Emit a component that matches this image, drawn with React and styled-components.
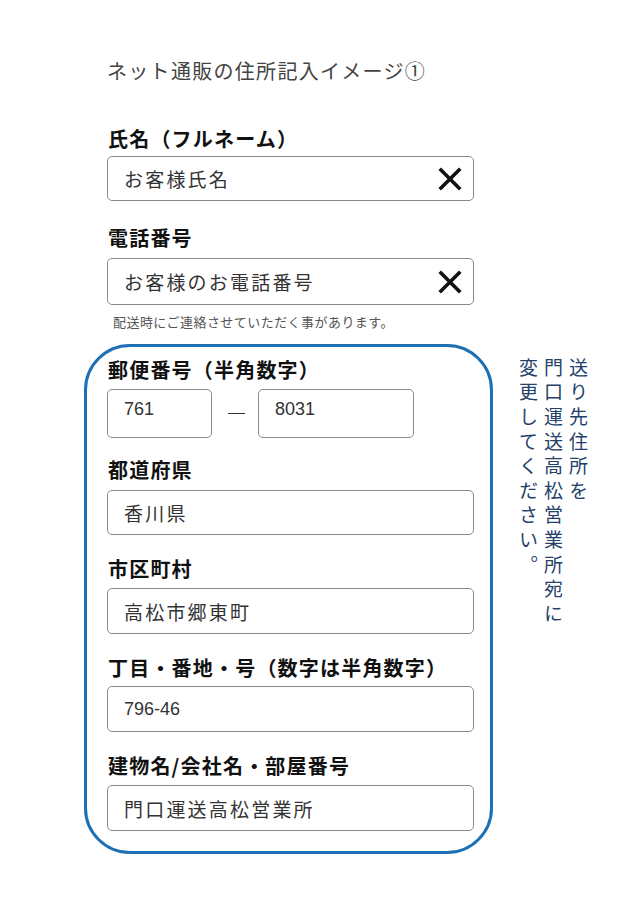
import React from "react";
import styled, { createGlobalStyle } from "styled-components";

const GlobalStyle = createGlobalStyle`
  html, body {
    margin: 0;
    padding: 0;
    background: #ffffff;
  }
  body {
    font-family: "Noto Sans CJK JP", "Noto Sans", sans-serif;
    color: #222;
    text-spacing-trim: space-all;
  }
`;

const Page = styled.div`
  display: flex;
  flex-direction: column;
  padding: 56px 0 40px 84px;
`;

const Title = styled.h1`
  margin: 0 0 40px 23px;
  font-size: 20px;
  font-weight: 400;
  letter-spacing: 1.3px;
  color: #444;
  line-height: 30px;
`;

const TopFields = styled.div`
  width: 409px;
  display: flex;
  flex-direction: column;
`;

const Field = styled.div`
  display: flex;
  flex-direction: column;
  padding: ${(p) => (p.$inner ? "0 16px 0 20px" : "0 19px 0 23px")};
  margin-bottom: ${(p) => p.$gap ?? 24}px;
`;

const Label = styled.div`
  font-size: 20px;
  font-weight: 700;
  letter-spacing: 1.2px;
  color: #111;
  line-height: 26px;
  margin-bottom: ${(p) => p.$gap ?? 4}px;
  padding-left: 1px;
  white-space: nowrap;
`;

const InputBox = styled.div`
  box-sizing: border-box;
  width: ${(p) => p.$width || "100%"};
  height: ${(p) => p.$height || 45}px;
  border: 1px solid #8a8a8a;
  border-radius: 5px;
  background: #fff;
  display: flex;
  align-items: ${(p) => (p.$top ? "flex-start" : "center")};
  padding: ${(p) => (p.$top ? "9px 10px 0 16px" : "0 10px 0 16px")};
  font-size: 19px;
  color: #333;
  font-family: ${(p) =>
    p.$latin
      ? '"Liberation Sans", Arial, sans-serif'
      : '"Noto Sans CJK JP", sans-serif'};
  ${(p) => (p.$latin ? "font-size: 18px;" : "")}
`;

const InputText = styled.span`
  flex: 1;
  white-space: nowrap;
  letter-spacing: ${(p) => (p.$wide ? "2.2px" : "0")};
`;

const ClearIcon = styled.svg`
  width: 24px;
  height: 24px;
  flex: none;
  margin-right: 1px;
`;

const Note = styled.div`
  margin: 8px 0 0 6px;
  font-size: 13px;
  letter-spacing: 0.45px;
  color: #555;
  line-height: 18px;
`;

const AddressRow = styled.div`
  display: flex;
  align-items: flex-start;
`;

const AddressBox = styled.div`
  box-sizing: border-box;
  width: 409px;
  flex: none;
  border: 3px solid #1d70b3;
  border-radius: 46px;
  padding: 10px 0 2px;
`;

const PostalRow = styled.div`
  display: flex;
  align-items: center;
`;

const Dash = styled.span`
  width: 17px;
  height: 1.5px;
  background: #333;
  margin: 0 13px 0 16px;
`;

const SideNote = styled.div`
  writing-mode: vertical-rl;
  margin: 14px 0 0 23px;
  font-size: 19px;
  line-height: 25px;
  letter-spacing: 5.6px;
  color: #24416a;
  font-family: "Noto Sans CJK JP", sans-serif;
`;

function Clear() {
  return (
    <ClearIcon viewBox="0 0 24 24">
      <path
        d="M3 3 L21 21 M21 3 L3 21"
        stroke="#111"
        strokeWidth="3.6"
        strokeLinecap="square"
        fill="none"
      />
    </ClearIcon>
  );
}

export default function App() {
  return (
    <>
      <GlobalStyle />
      <Page>
        <Title>ネット通販の住所記入イメージ①</Title>

        <TopFields>
          <Field $gap={24}>
            <Label>氏名（フルネーム）</Label>
            <InputBox>
              <InputText $wide>お客様氏名</InputText>
              <Clear />
            </InputBox>
          </Field>

          <Field $gap={13}>
            <Label $gap={7}>電話番号</Label>
            <InputBox $height={47}>
              <InputText $wide>お客様のお電話番号</InputText>
              <Clear />
            </InputBox>
            <Note>配送時にご連絡させていただく事があります。</Note>
          </Field>
        </TopFields>

        <AddressRow>
          <AddressBox>
            <Field $inner $gap={19}>
              <Label $gap={6}>郵便番号（半角数字）</Label>
              <PostalRow>
                <InputBox $width="105px" $height={49} $latin $top>
                  <InputText>761</InputText>
                </InputBox>
                <Dash />
                <InputBox $width="156px" $height={49} $latin $top>
                  <InputText>8031</InputText>
                </InputBox>
              </PostalRow>
            </Field>

            <Field $inner $gap={21}>
              <Label $gap={7}>都道府県</Label>
              <InputBox>
                <InputText $wide>香川県</InputText>
              </InputBox>
            </Field>

            <Field $inner $gap={21}>
              <Label $gap={6}>市区町村</Label>
              <InputBox $height={46}>
                <InputText $wide>高松市郷東町</InputText>
              </InputBox>
            </Field>

            <Field $inner $gap={21}>
              <Label $gap={5}>丁目・番地・号（数字は半角数字）</Label>
              <InputBox $height={46} $latin>
                <InputText>796-46</InputText>
              </InputBox>
            </Field>

            <Field $inner $gap={18}>
              <Label $gap={6}>建物名/会社名・部屋番号</Label>
              <InputBox $height={46}>
                <InputText $wide>門口運送高松営業所</InputText>
              </InputBox>
            </Field>
          </AddressBox>

          <SideNote>
            送り先住所を
            <br />
            門口運送高松営業所宛に
            <br />
            変更してください。
          </SideNote>
        </AddressRow>
      </Page>
    </>
  );
}
